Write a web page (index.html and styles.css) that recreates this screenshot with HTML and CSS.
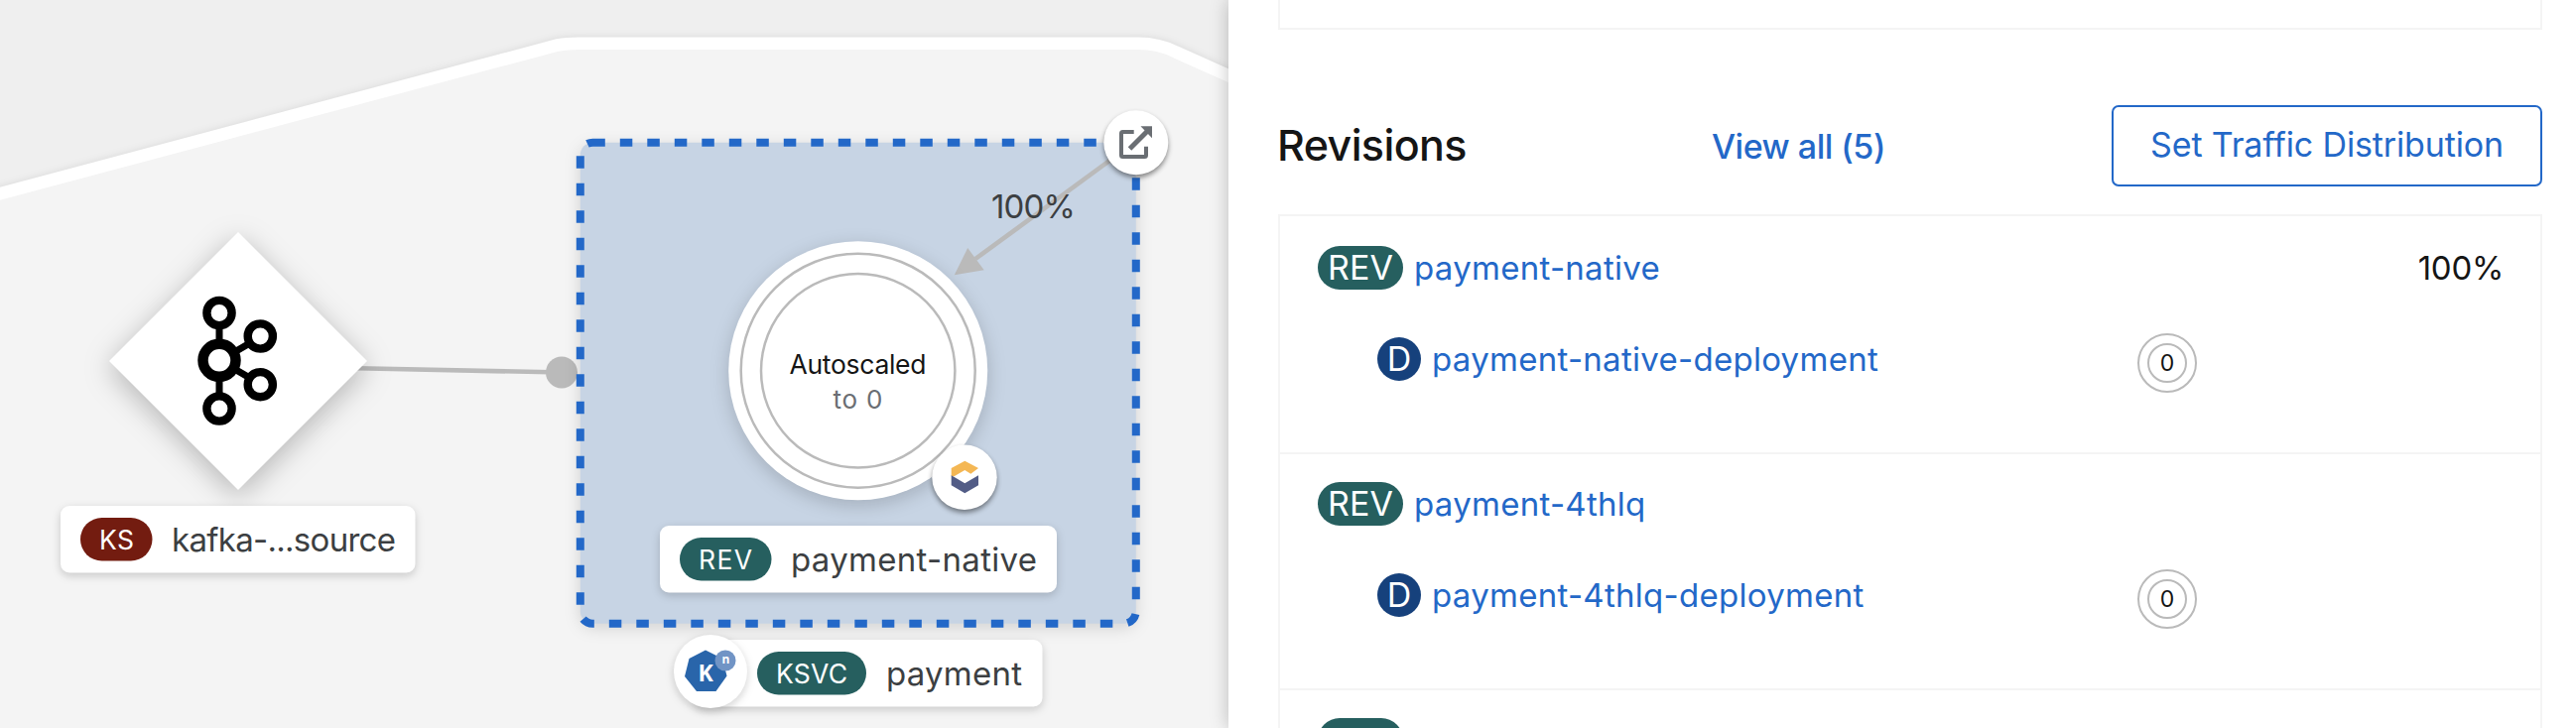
FILE: index.html
```html
<!DOCTYPE html>
<html lang="en">
<head>
<meta charset="utf-8">
<title>Topology</title>
<link rel="stylesheet" href="styles.css">
</head>
<body>
<main class="page">
  <section class="topology">
    <svg class="graph" width="1238" height="734" viewBox="0 0 1238 734">
      <path class="app-group" d="M-60 211.200L562 45.500Q571 43.700 583 43.700H1147Q1168 43.700 1185 52.500L1300 104V900H-60Z"/>

      <path class="edge" d="M360 371.200L566 375.500"/>
      <circle class="edge-end" cx="566" cy="375.500" r="16"/>
      <path class="source-node" d="M240 234L370 364L240 494L110 364Z"/>
      <g class="kafka">
        <path d="M221 330V347M221 380V397M238 354L250 347M238 373L250 380"/>
        <circle cx="221" cy="315.500" r="12.600"/>
        <circle cx="221" cy="412" r="12.600"/>
        <circle cx="262.300" cy="339" r="12.600"/>
        <circle cx="262.300" cy="387.700" r="12.600"/>
        <circle class="kafka-hub" cx="221" cy="363.300" r="16.500"/>
      </g>
      <rect class="label" x="61" y="510" width="357.500" height="67.500" rx="9"/>
      <rect class="pill-source" x="81" y="522" width="72.500" height="43.500" rx="21.700"/>
      <text class="kind" x="100" y="553.500" textLength="35">KS</text>
      <text class="name" x="173" y="555.500" textLength="226">kafka-...source</text>

      <rect class="service-fill" x="584.800" y="143.700" width="560" height="485" rx="12.500"/>
      <rect class="service-border" x="584.800" y="143.700" width="560" height="485" rx="12.500"/>
      <path class="edge" d="M1144 143L983 261"/>
      <path class="edge-end" d="M961.800 277.300L975.200 250L991.700 272.300Z"/>
      <text class="name" x="999" y="219.500" textLength="85">100%</text>

      <circle class="revision" cx="864.700" cy="373.700" r="130.500"/>
      <circle class="ring" cx="864.700" cy="373.700" r="118"/>
      <circle class="ring" cx="864.700" cy="373.700" r="97.700"/>
      <text class="pod-title" x="795.500" y="376.500" textLength="138">Autoscaled</text>
      <text class="pod-sub" x="839.500" y="411.500" textLength="50">to 0</text>

      <circle class="decorator" cx="1144.800" cy="143.700" r="32.500"/>
      <g class="open-icon">
        <path d="M1142.700 133H1131.500Q1130 133 1130 134.500V156.500Q1130 158 1131.500 158H1153.500Q1155 158 1155 156.500V147.700"/>
        <path class="open-shaft" d="M1138.500 150L1156 132.500"/>
        <path class="open-head" d="M1149.500 127.300H1161V139.300Z"/>
      </g>
      <circle class="decorator" cx="972" cy="481.300" r="32.700"/>
      <path fill="#f4b754" d="M958.700 472L972.300 464.700L986 472L978.300 477.700L972.300 474L961.500 480.300H958.700Z"/>
      <path fill="#525c86" d="M958.700 479.300L972.300 487.300L986 479.300V489.300L972.300 497.300L958.700 489.300Z"/>

      <rect class="label" x="665" y="530" width="400" height="67.500" rx="9"/>
      <rect class="pill-revision" x="685" y="542" width="92.500" height="43.500" rx="21.700"/>
      <text class="kind" x="704" y="573.500" textLength="54">REV</text>
      <text class="name" x="797" y="575.500" textLength="248">payment-native</text>

      <rect class="label" x="700" y="645" width="350.500" height="67.500" rx="9"/>
      <circle class="label" cx="716" cy="677" r="37"/>
      <rect class="pill-revision" x="763" y="657" width="110" height="43.500" rx="21.700"/>
      <text class="kind" x="782" y="689" textLength="72">KSVC</text>
      <text class="name" x="893" y="690.500" textLength="137">payment</text>
      <path class="knative" d="M711 655.500L728 664L732.500 681.500L721.500 697H702L690 682L694.500 664Z"/>
      <circle class="knative-dot" cx="731" cy="666" r="10.500"/>
      <text class="knative-k" x="703.500" y="686.500">K</text>
      <text class="knative-n" x="727.500" y="669">n</text>
    </svg>
  </section>

  <aside class="panel">
    <div class="card-end"></div>
    <header class="heading">
      <h2 class="title">Revisions</h2>
      <a class="view-all">View all (5)</a>
      <button class="action" type="button">Set Traffic Distribution</button>
    </header>
    <ul class="revisions">
      <li class="item">
        <div class="row"><span class="badge">REV</span><a class="link">payment-native</a><span class="percent">100%</span></div>
        <div class="row deployment"><span class="badge badge-d">D</span><a class="link">payment-native-deployment</a><span class="pods"><span class="pods-inner">0</span></span></div>
      </li>
      <li class="item">
        <div class="row"><span class="badge">REV</span><a class="link">payment-4thlq</a></div>
        <div class="row deployment"><span class="badge badge-d">D</span><a class="link">payment-4thlq-deployment</a><span class="pods"><span class="pods-inner">0</span></span></div>
      </li>
      <li class="item">
        <div class="row"><span class="badge"></span></div>
      </li>
    </ul>
  </aside>
</main>
</body>
</html>
```
FILE: styles.css
```css
* { box-sizing: border-box; }
body { margin: 0; font-family: Inter, "Liberation Sans", sans-serif; color: #151515; }
.page { display: flex; width: 2596px; height: 734px; overflow: hidden; }

/* Topology canvas */
.topology { width: 1238px; background: #efefef; flex: none; }
.graph { display: block; }
.app-group { fill: #f4f4f4; stroke: #fff; stroke-width: 12.6; filter: drop-shadow(0 2px 5px rgba(3, 3, 3, .14)); }
.edge { stroke: #bababa; stroke-width: 4.6; fill: none; }
.edge-end { fill: #bababa; }
.source-node { fill: #fff; filter: drop-shadow(0 7px 14px rgba(3, 3, 3, .26)); }
.kafka { fill: none; stroke: #000; stroke-width: 8.4; }
.kafka path { stroke-width: 7; }
.kafka-hub { stroke-width: 10.5; }
.label { fill: #fff; filter: drop-shadow(0 3px 4px rgba(3, 3, 3, .18)); }
.pill-source { fill: #731c10; }
.pill-revision { fill: #265f5f; }
.kind { font-size: 26.5px; fill: #fff; }
.name { font-size: 33px; fill: #3c3f42; }
.service-fill { fill: #c7d4e4; filter: drop-shadow(0 4px 8px rgba(3, 3, 3, .14)); }
.service-border { fill: none; stroke: #2368c8; stroke-width: 8; stroke-dasharray: 12.5 15; }
.revision { fill: #fff; filter: drop-shadow(0 5px 9px rgba(3, 3, 3, .18)); }
.ring { fill: none; stroke: #bababa; stroke-width: 2.5; }
.pod-title { font-size: 26.5px; fill: #151515; }
.pod-sub { font-size: 26px; fill: #6a6e73; }
.decorator { fill: #fff; filter: drop-shadow(0 3px 2.5px rgba(3, 3, 3, .45)); }
.open-icon { fill: none; stroke: #6a6e73; stroke-width: 4; }
.open-icon .open-shaft { stroke-width: 5; }
.open-icon .open-head { fill: #6a6e73; stroke: none; }
.knative { fill: #2965aa; }
.knative-dot { fill: #7194c5; }
.knative-k { font: 700 23px "Open Sans", sans-serif; fill: #fff; }
.knative-n { font: 700 12px "Open Sans", sans-serif; fill: #fff; }

/* Details panel */
.panel { position: relative; flex: 1; padding: 0 34px 0 50px; background: #fff; box-shadow: 0 0 18px rgba(3, 3, 3, .23); }
.card-end { height: 30px; border: 2px solid #f4f4f4; border-top: 0; }
.heading { display: flex; align-items: center; height: 82px; margin: 76px 0 28px; }
.title { width: 437px; margin: -2px 0 0 -1px; font-size: 43px; font-weight: 500; letter-spacing: -.6px; }
.view-all { margin-left: 1px; font-size: 34px; font-weight: 500; letter-spacing: -.5px; color: #2368c8; }
.action { width: 434px; height: 82px; margin-left: auto; padding: 0 0 4px; border: 2px solid #2368c8; border-radius: 7px; background: #fff; font: 400 34px Inter, sans-serif; letter-spacing: -.15px; color: #2368c8; }
.revisions { margin: 0; padding: 0; list-style: none; border: 2px solid #f4f4f4; }
.item { height: 238px; padding: 28px 38px; border-bottom: 2px solid #f4f4f4; }
.item:first-child { height: 240px; padding-top: 30px; }
.row { display: flex; align-items: center; height: 44px; font-size: 33px; white-space: nowrap; }
.deployment { margin: 48px 0 0 60px; }
.badge { width: 86px; height: 44px; margin-right: 11px; border-radius: 22px; background: #265f5f; color: #fff; font-size: 34px; line-height: 43px; text-align: center; }
.badge-d { width: 44px; background: #16417c; }
.link { letter-spacing: .28px; color: #2368c8; }
.percent { margin-right: -1px; margin-left: auto; letter-spacing: -.3px; }
.pods { display: flex; align-items: center; justify-content: center; width: 60px; height: 60px; margin: 8px 308px 0 auto; border: 2.5px solid #bababa; border-radius: 50%; }
.pods-inner { display: flex; align-items: center; justify-content: center; width: 40px; height: 40px; border: 2.5px solid #bababa; border-radius: 50%; font-size: 23px; }
```
